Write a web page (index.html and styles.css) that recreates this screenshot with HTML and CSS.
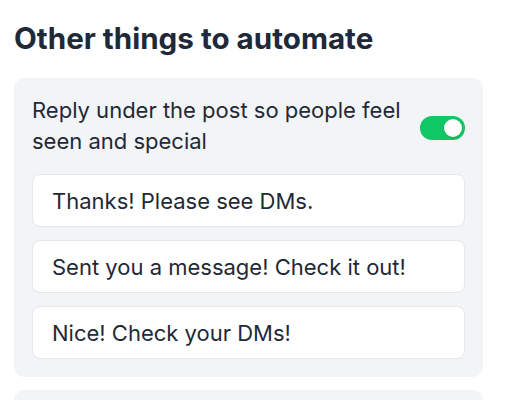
FILE: index.html
```html
<!DOCTYPE html>
<html>
<head>
<meta charset="utf-8">
<link rel="stylesheet" href="styles.css">
</head>
<body>
<section class="section">
  <h2 class="title">Other things to automate</h2>
  <div class="card">
    <div class="row">
      <p class="label">Reply under the post so people feel seen and special</p>
      <span class="toggle"><span class="knob"></span></span>
    </div>
    <div class="replies">
      <div class="reply">Thanks! Please see DMs.</div>
      <div class="reply">Sent you a message! Check it out!</div>
      <div class="reply">Nice! Check your DMs!</div>
    </div>
  </div>
  <div class="card card-next"></div>
</section>
</body>
</html>
```
FILE: styles.css
```css
* { box-sizing: border-box; }
body {
  margin: 0;
  background: #fff;
  font-family: Inter, "Noto Sans", sans-serif;
  color: #1f2937;
}
.section {
  padding: 20px 25px 0 14px;
  display: flex;
  flex-direction: column;
}
.title {
  margin: 0 0 22px;
  font-size: 29.6px;
  line-height: 36px;
  font-weight: 700;
  color: #1f2937;
}
.card {
  background: #f3f4f6;
  border-radius: 10px;
  padding: 17px 18px 18px;
}
.card-next {
  margin-top: 13px;
  min-height: 60px;
}
.row {
  display: flex;
  align-items: center;
  justify-content: space-between;
  gap: 12px;
}
.label {
  margin: 0;
  font-size: 22px;
  line-height: 31px;
  width: 385px;
}
.toggle {
  flex: none;
  width: 45px;
  height: 24px;
  margin-top: 3px;
  border-radius: 12px;
  background: #10c765;
  display: flex;
  align-items: center;
  justify-content: flex-end;
  padding: 3px;
}
.knob {
  width: 18px;
  height: 18px;
  border-radius: 50%;
  background: #fff;
  box-shadow: 0 1px 2px rgba(0,0,0,0.15);
}
.replies {
  margin-top: 17px;
  display: flex;
  flex-direction: column;
  gap: 13px;
}
.reply {
  background: #fff;
  border: 1px solid #e5e7eb;
  border-radius: 8px;
  height: 53px;
  padding: 0 19px;
  display: flex;
  align-items: center;
  font-size: 22px;
}
```
